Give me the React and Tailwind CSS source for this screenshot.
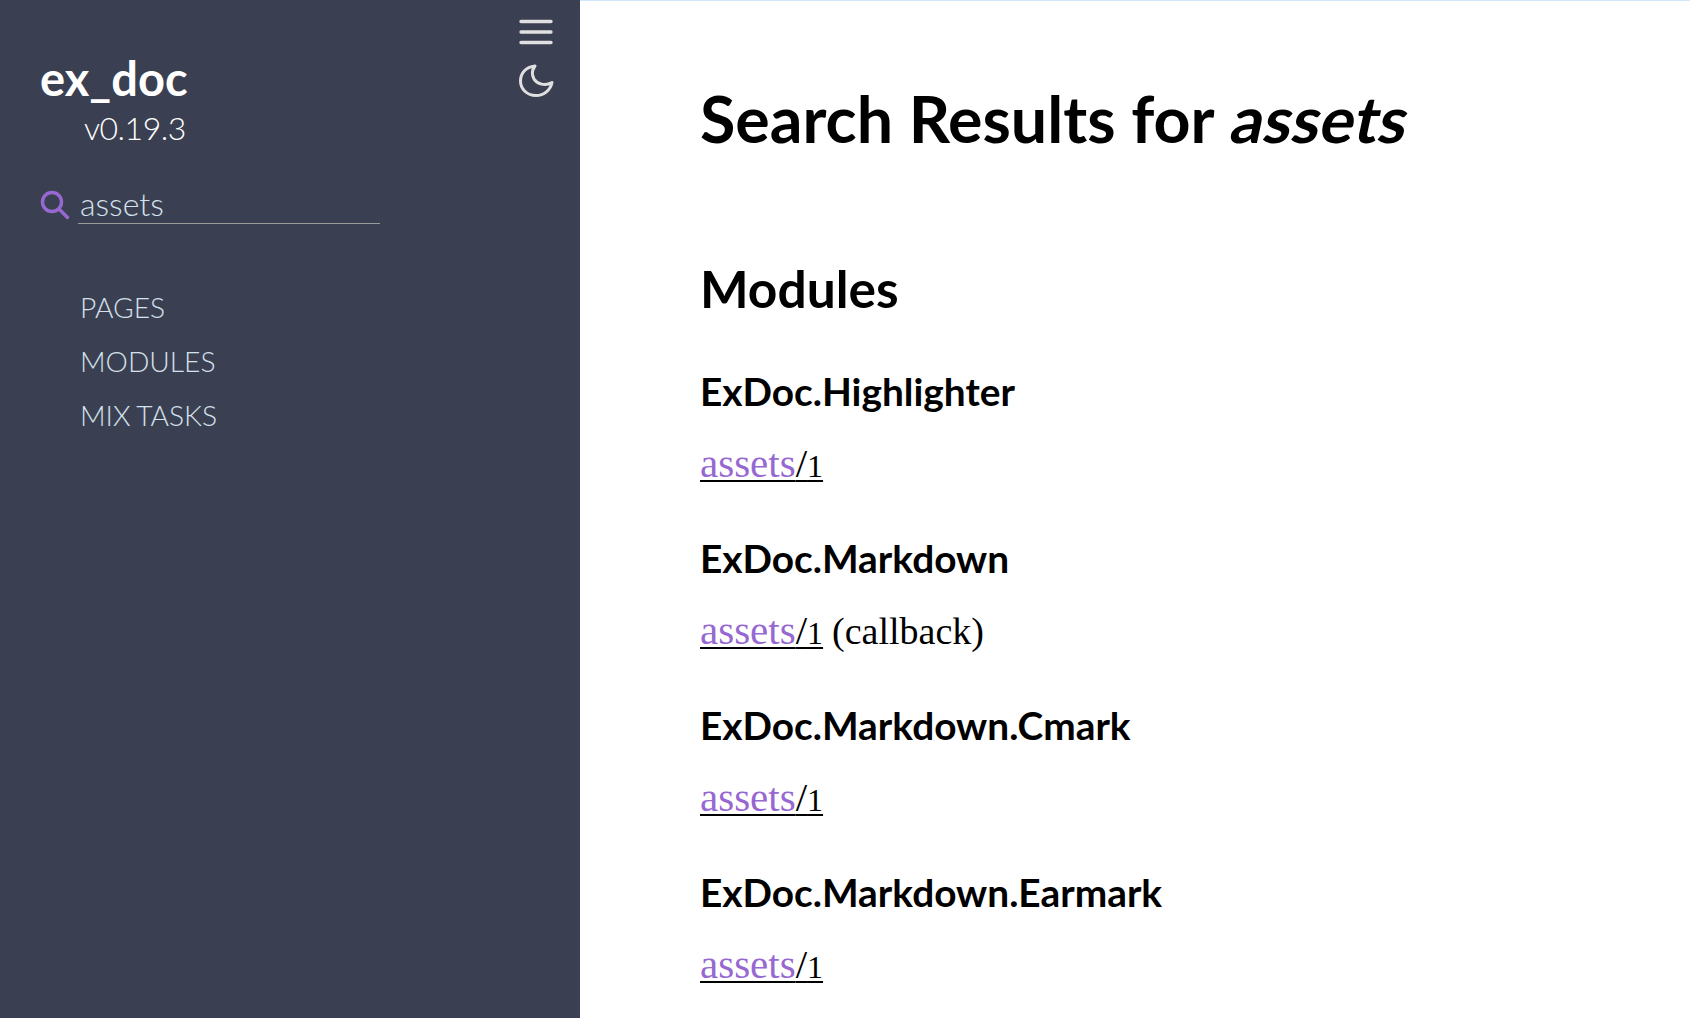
import React from "react";

const results = [
  { name: "ExDoc.Highlighter" },
  { name: "ExDoc.Markdown", extra: "(callback)" },
  { name: "ExDoc.Markdown.Cmark" },
  { name: "ExDoc.Markdown.Earmark" },
];

const Sidebar = () => (
  <aside className="w-[580px] h-full shrink-0 bg-[#3a4051] relative pl-10 pt-[46px] font-['Lato',sans-serif]">
    {/* Top right icons */}
    <div className="absolute left-[518px] top-[18px] flex flex-col gap-[17px] text-[#e0e0e0]">
      <svg width="36" height="28" viewBox="0 0 36 28" fill="none" stroke="currentColor" strokeWidth="3.4" strokeLinecap="round">
        <path d="M3 3.5h30M3 14h30M3 24.5h30" />
      </svg>
      <svg width="36" height="34" viewBox="0 0 36 34" fill="none" stroke="currentColor" strokeWidth="3" strokeLinecap="round" strokeLinejoin="round">
        <path d="M17 3C7.500 4 2.500 10.500 2.500 18c0 8 6.500 14.500 15.500 14.500 8 0 14.500-5.500 16-13-7 4-15 1.500-18-3.500C13.500 11.500 14 7 17 3z" />
      </svg>
    </div>

    <h1 className="text-[47px] leading-[64px] font-bold text-white">ex_doc</h1>
    <div className="pl-[44px] text-[32px] leading-[36px] font-light text-white tracking-[-0.5px]">v0.19.3</div>

    <div className="flex items-center mt-[39px]">
      <svg width="30" height="30" viewBox="0 0 30 30" fill="none" stroke="#9768d1" strokeWidth="3.4" strokeLinecap="round" className="shrink-0">
        <circle cx="12" cy="12" r="9.500" />
        <path d="M19 19l8.500 8.500" />
      </svg>
      <div className="w-[302px] ml-2 border-b border-[#9a9a9a] h-[39px] text-[32px] leading-[38px] font-light text-[#d5e1ec] pl-[2px]">assets</div>
    </div>

    <nav className="mt-[56px] pl-[40px] text-[28.200px] leading-[54px] font-light text-[#d5e1ec]">
      <div>PAGES</div>
      <div>MODULES</div>
      <div>MIX <span className="ml-[-2px]">TASKS</span></div>
    </nav>
  </aside>
);

const App = () => (
  <div className="w-full h-[1018px] flex overflow-hidden bg-white">
    <Sidebar />
    <main className="flex-1 border-t border-[#cfe6fb] pl-[120px] pt-[74px] text-black">
      <h1 className="font-['Lato',sans-serif] font-bold text-[64.500px] leading-[86px]">
        Search Results for <em className="not-italic inline-block -skew-x-[12deg] ml-[4px]">assets</em>
      </h1>
      <h2 className="font-['Lato',sans-serif] font-bold text-[51.500px] leading-[64px] mt-[95px]">Modules</h2>
      <div className="mt-[43px]">
        {results.map((r, i) => (
          <section key={r.name} className={i === 0 ? "" : "mt-[39px]"}>
            <h3 className="font-['Lato',sans-serif] font-bold text-[38.800px] leading-[56px]">{r.name}</h3>
            <p className="mt-[19px] font-['Liberation_Serif',serif] text-[41px] leading-[50px]">
              <span className="underline decoration-2 underline-offset-[3px]">
                <span className="text-[#9768d1]">assets</span>/<span className="text-[32px]">1</span>
              </span>
              {r.extra && <span className="text-[38px] ml-[9px]">{r.extra}</span>}
            </p>
          </section>
        ))}
      </div>
    </main>
  </div>
);

export default App;
